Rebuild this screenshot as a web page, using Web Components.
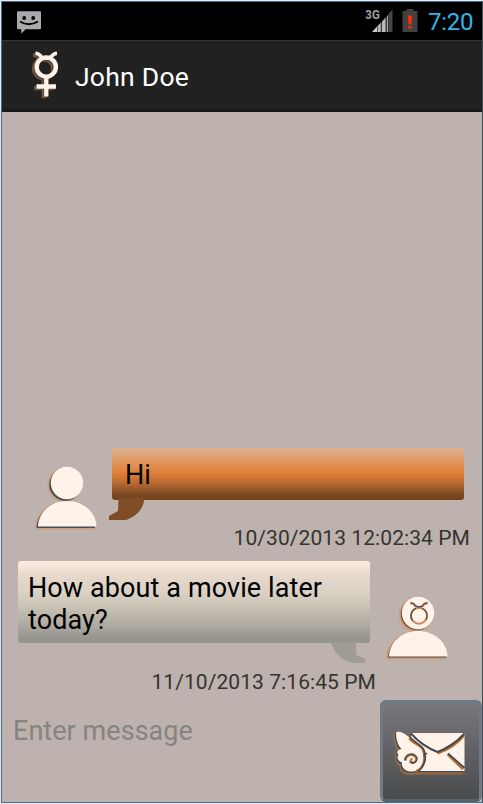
<!DOCTYPE html>
<html lang="en">
<head>
<meta charset="utf-8">
<title>John Doe</title>
<style>
body{margin:0;font-family:Roboto,"Liberation Sans",sans-serif}
</style>
</head>
<body>
<chat-screen></chat-screen>
<script>
function define(name, html) {
  const t = document.createElement('template');
  t.innerHTML = html;
  customElements.define(name, class extends HTMLElement {
    constructor() {
      super();
      this.attachShadow({mode: 'open'}).appendChild(t.content.cloneNode(true));
    }
  });
}

define('status-bar', `
<style>
:host{display:flex;box-sizing:border-box;height:38px;background:#000;align-items:flex-start;padding-left:14px}
svg{display:block}
.chat{margin-top:8px}
.signal{margin:5px 0 0 auto}
.battery{margin:7px 0 0 9px}
time{font-size:24px;line-height:38px;height:38px;color:#33b5e5;width:54px;text-align:left;padding-top:1px;margin-left:10px;box-sizing:border-box;letter-spacing:-.3px;white-space:nowrap}
</style>
<svg class="chat" width="27" height="26" viewBox="16 10 27 26"><path d="M18 11.3h22q1 0 1 1v16q0 1-1 1H25.500l-4.200 4.500v-4.500H18q-1 0-1-1v-16q0-1 1-1z" fill="#aaa"/><circle cx="24.200" cy="18" r="1.900"/><circle cx="33.200" cy="18" r="1.900"/><path d="M20 21.500q8.500 5.500 18 0" fill="none" stroke="#000" stroke-width="1.800"/></svg>
<svg class="signal" width="29" height="26" viewBox="364 7 29 26"><text x="365.300" y="19" font-size="13.500" font-weight="700" textLength="14.500" lengthAdjust="spacingAndGlyphs" fill="#a0a0a0">3G</text><path d="M372 32l5-5.500V32z" fill="#ccc"/><path d="M377.500 26l3.500-3.500V32h-3.500zM382 21.500l3.700-4V32H382z" fill="#b8b8b8"/><path d="M381 22.500V32M386 17V32" stroke="#777"/><path d="M387 16l1-1V32h-1z" fill="#aaa"/><path d="M388.300 14.300l4.200-5V32h-4.200z" fill="#464646"/></svg>
<svg class="battery" width="16" height="24" viewBox="402 9 16 24"><path d="M406.500 9h7v2h4v21h-15V11h4z" fill="#414141"/><path d="M407.800 15.500h4.400l-.8 9h-2.800zM408.300 26h3.400v2.500h-3.400z" fill="#ff2b08"/></svg>
<time>7:20</time>`);

define('mercury-icon', `
<style>:host{display:block}svg{display:block;overflow:visible}</style>
<svg width="32" height="52" viewBox="30 50 32 52"><defs><g id="m" fill="none"><circle cx="46.300" cy="67" r="9.600" stroke-width="4.400"/><path d="M35.500 53.300Q39 53.500 41.500 57Q46.300 59.500 51 57Q53.500 53.500 57 53.300" stroke-width="3.400"/><path d="M46.300 76v20.500M36.500 86.500h19.500" stroke-width="4.300"/></g></defs>
<use href="#m" stroke="#a85f27" transform="translate(-2.500 1.700)" opacity=".8"/><use href="#m" stroke="#47505a" transform="translate(-1.300 1)"/><use href="#m" stroke="#fff2e8"/></svg>`);

define('title-bar', `
<style>
:host{display:flex;box-sizing:border-box;height:72px;background:#212121;border-top:1px solid #343434;border-bottom:3px solid #181818;padding:9px 0 0 28px}
.name{font-size:26.500px;line-height:32px;letter-spacing:.25px;color:#fff;margin:11px 0 0 13px}
</style>
<mercury-icon></mercury-icon><span class="name"><slot></slot></span>`);

customElements.define('user-avatar', class extends HTMLElement {
  connectedCallback() {
    const sign = this.hasAttribute('sign');
    const root = this.attachShadow({mode: 'open'});
    root.innerHTML = `
<style>:host{display:block;width:64px;height:66px;flex:none}svg{display:block;overflow:visible}</style>
<svg width="64" height="66" viewBox="0 0 64 66">
<defs><filter id="b" x="-20%" y="-20%" width="140%" height="140%"><feGaussianBlur stdDeviation=".9"/></filter>
<g id="p"><circle cx="32" cy="19" r="16.200"/><path d="M3 62.500C3.500 47 17 37 32 37s29 10 29.500 25.500z"/></g></defs>
<use href="#p" fill="#df7e35" transform="translate(-2 1.800)" filter="url(#b)"/>
<use href="#p" fill="#47505a" transform="${sign ? 'translate(-.8 .9)' : 'translate(-1.500 1.600)'}"/>
<use href="#p" fill="#fff2e8"/>
${sign ? '<g fill="none"><circle cx="33" cy="21.700" r="8" stroke="#cf8557" stroke-width="2"/><path d="M24.500 9.200Q28 9.600 29.500 12.200Q33 14.600 36.500 12.200Q38 9.600 41.500 9.200" stroke="#cf8557" stroke-width="2.200"/><path d="M24.500 8.700Q28 9 29.500 11.700Q33 14 36.500 11.700Q38 9 41.500 8.700" stroke="#414b55" stroke-width="1.200"/><path d="M30 14.200a8.300 8.300 0 0 0-3.500 12.500M36.500 14.500a8 8 0 0 1 3.500 11.500" stroke="#414b55" stroke-width="1.100"/></g>' : ''}
</svg>`;
  }
});

define('speech-bubble', `
<style>
:host{display:block;position:relative;box-sizing:border-box;width:352px;border-radius:3px;font-size:27px;line-height:32px;color:#000}
:host([kind=in]){height:52px;padding:11px 13px;background:linear-gradient(#ddb493 0,#df9e6c 18%,#e08a4b 38%,#dc7d35 50%,#bd6b32 66%,#99592b 78%,#794a22 90%,#724219)}
:host([kind=out]){height:82px;padding:11px 10px;letter-spacing:.1px;background:linear-gradient(#fdeee3 0,#e8dacc 16%,#d9d0c3 40%,#c4beb1 60%,#aaa79f 81%,#95948d 94%,#96958e)}
svg{position:absolute;display:none}
:host([kind=in]) .l{display:block;left:-3px;top:50px}
:host([kind=out]) .r{display:block;left:313px;top:81px}
.t{display:block;white-space:pre-line}
</style>
<span class="t"><slot></slot></span>
<svg class="l" width="37" height="23"><path d="M9.500 0H35.500Q34 16 17 22H0V18L9 13z" fill="#7e4d24"/></svg>
<svg class="r" width="36" height="22"><path d="M0 0H25V12.500L34 17V21H21Q5 17 0 0z" fill="#9e9c94"/></svg>`);

define('time-stamp', `
<style>:host{display:block;font-size:21px;line-height:24px;letter-spacing:.08px;color:#34342f;white-space:nowrap;text-align:right}</style><slot></slot>`);

define('message-list', `
<style>:host{display:flex;flex-direction:column;justify-content:flex-end;flex:1;background:#bdb2ad;min-height:0}</style><slot></slot>`);

define('message-row', `
<style>
:host{display:grid;position:relative}
:host([kind=in]){height:113px;grid-template:78px 35px / 110px 1fr}
:host([kind=out]){height:139px;grid-template:109px 30px / 384px 1fr}
:host([kind=in]) .a{padding:16px 0 0 33px}
:host([kind=out]) .a{padding:33px 0 0;grid-column:2;grid-row:1}
:host([kind=out]) .b{padding-left:16px;grid-column:1;grid-row:1}
.s{grid-column:1/3}
:host([kind=in]) .s{padding-right:12px}
:host([kind=out]) .s{width:374px}
</style>
<div class="a"><slot name="avatar"></slot></div><div class="b"><slot></slot></div><div class="s"><slot name="time"></slot></div>`);

define('mail-button', `
<style>
:host{display:block;box-sizing:border-box;width:102px;height:102px;border:3px solid #6f7885;border-bottom-color:#596067;border-radius:6px;background:linear-gradient(#78777c,#65666a 40%,#484b4c)}
svg{display:block;overflow:visible}
</style>
<svg width="96" height="96" viewBox="383 703 96 96">
<defs><filter id="g" x="-20%" y="-20%" width="140%" height="140%"><feGaussianBlur stdDeviation=".9"/></filter>
<path id="e" d="M411 733h53.500v38H411z"/>
<path id="w" d="M396.500 732C402 730 409 737 413 741C417 744.500 422 746 423 750C424 753 425.500 758 423 764C420.500 769 417 771.500 411.500 771.500C405 771.500 401 767 402 762.500C398 761.500 396.500 757.500 398.500 755C396 753 397.500 749.500 401.500 749C398 746 395 737 396.500 732z"/></defs>
<g fill="#df7e2c" transform="translate(-1.500 2.500)" filter="url(#g)"><use href="#e"/><use href="#w"/></g>
<g fill="#424950" transform="translate(-1.200 1.500)"><use href="#e"/><use href="#w"/></g>
<use href="#e" fill="#fff2e8"/>
<g fill="none"><path d="M437.500 753.500Q455 747 464 735.500" stroke="#ba6a2c" stroke-width="2.200"/><path d="M411 733.500Q422 746 437.500 752Q453 746 464.500 733.500" stroke="#404950" stroke-width="1.900"/><path d="M447.500 754.500L463 769.500" stroke="#ba6a2c" stroke-width="2"/><path d="M448 753.300L464.500 768" stroke="#404950" stroke-width="1.800"/></g>
<use href="#w" fill="#fff2e8"/>
<g fill="none" stroke-linecap="round"><path d="M410 739C416 745 423 746 423.500 751C426 758 424 768 417 771" stroke="#b2652f" stroke-width="2.600"/><path d="M411 738C417 744.500 423.500 746 424.300 751C427 759 424 767 418 771M424 755.500l2.500-2" stroke="#414b52" stroke-width="1.600"/><path d="M405.500 760C406 755.500 412 753 415.500 757C418 761 413 764.500 410.500 761.500L411.500 759" stroke="#bd7640" stroke-width="2.200"/><path d="M404.800 759.500C406 754.500 412 752 416 756.200C418.800 760.500 414 765 410.200 762" stroke="#424b51" stroke-width="1.400"/></g>
</svg>`);

define('message-composer', `
<style>
:host{display:flex;height:102px;background:#bdb2ad;justify-content:space-between}
.hint{font-size:27px;line-height:32px;letter-spacing:.05px;color:#868481;padding:15px 0 0 11px}
</style>
<span class="hint"><slot></slot></span><mail-button></mail-button>`);

define('chat-screen', `
<style>
:host{display:flex;box-sizing:border-box;width:483px;height:804px;background:#dcebf6;padding:1px 0 1px 1px}
main{box-sizing:border-box;display:flex;flex-direction:column;width:482px;height:802px;border:1px solid #536b84;border-right-color:#454b53}
</style>
<main>
<status-bar></status-bar>
<title-bar>John Doe</title-bar>
<message-list>
<message-row kind="in"><user-avatar slot="avatar"></user-avatar><speech-bubble kind="in">Hi</speech-bubble><time-stamp slot="time">10/30/2013 12:02:34 PM</time-stamp></message-row>
<message-row kind="out"><user-avatar slot="avatar" sign></user-avatar><speech-bubble kind="out">How about a movie later today?</speech-bubble><time-stamp slot="time">11/10/2013 7:16:45 PM</time-stamp></message-row>
</message-list>
<message-composer>Enter message</message-composer>
</main>`);
</script>
</body>
</html>
